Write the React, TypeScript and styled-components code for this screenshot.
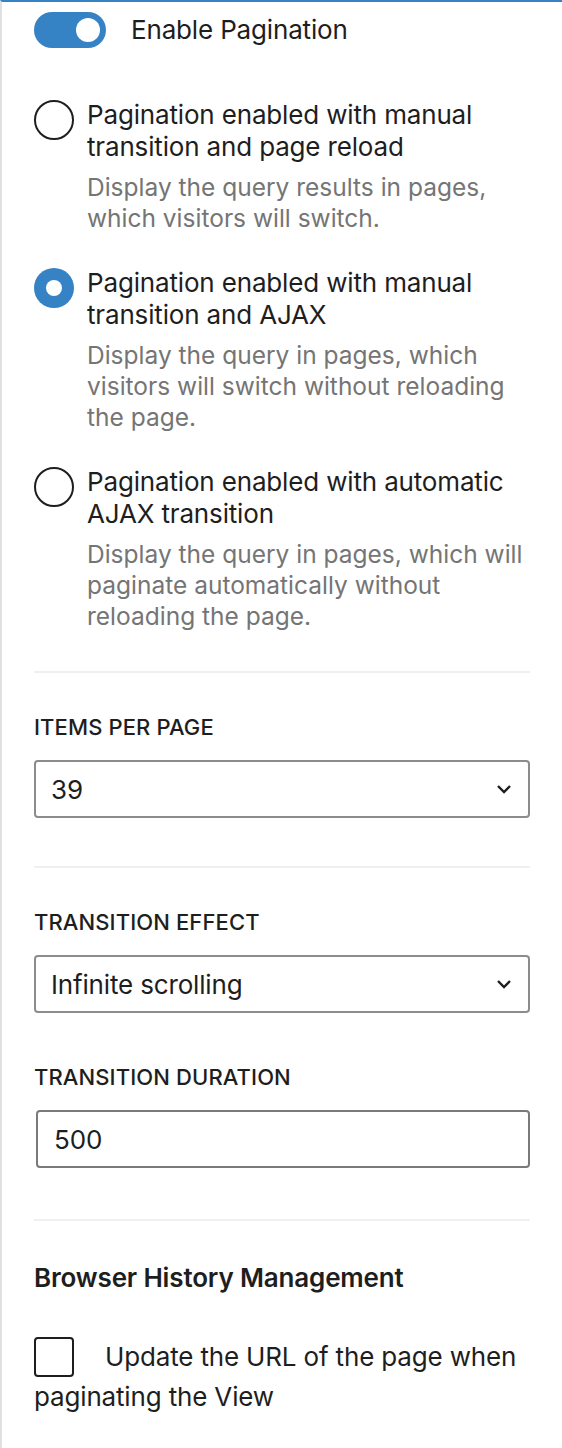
import styled, { createGlobalStyle } from "styled-components";

const GlobalStyle = createGlobalStyle`
  html, body {
    margin: 0;
    padding: 0;
    background: #ffffff;
  }
  body {
    font-family: Inter, "Noto Sans", "Liberation Sans", sans-serif;
    color: #1e1e1e;
    -webkit-font-smoothing: antialiased;
  }
`;

const accent = "#3582c4";

const Sidebar = styled.div`
  box-sizing: border-box;
  width: 562px;
  min-height: 1448px;
  border-left: 2px solid #e0e0e0;
  border-top: 2px solid ${accent};
  padding: 10px 32px 40px 32px;
  display: flex;
  flex-direction: column;
  letter-spacing: -0.01em;
`;

const ToggleRow = styled.label`
  display: flex;
  align-items: center;
  gap: 25px;
  height: 36px;
  font-size: 26px;
  line-height: 32px;
`;

const ToggleTrack = styled.span<{ $on: boolean }>`
  position: relative;
  width: 72px;
  height: 36px;
  border-radius: 18px;
  background: ${({ $on }) => ($on ? accent : "#ffffff")};
  flex-shrink: 0;
`;

const ToggleKnob = styled.span`
  position: absolute;
  top: 6px;
  right: 6px;
  width: 24px;
  height: 24px;
  border-radius: 50%;
  background: #ffffff;
`;

const RadioList = styled.div`
  display: flex;
  flex-direction: column;
  gap: 33px;
  margin-top: 51px;
`;

const Option = styled.label`
  display: flex;
  align-items: flex-start;
  gap: 13px;
`;

const RadioDot = styled.span<{ $checked: boolean }>`
  box-sizing: border-box;
  flex-shrink: 0;
  width: 40px;
  height: 40px;
  margin-top: 1px;
  border-radius: 50%;
  border: ${({ $checked }) => ($checked ? "none" : "2.5px solid #1e1e1e")};
  background: ${({ $checked }) => ($checked ? accent : "#ffffff")};
  display: flex;
  align-items: center;
  justify-content: center;

  &::after {
    content: "";
    display: ${({ $checked }) => ($checked ? "block" : "none")};
    width: 16px;
    height: 16px;
    border-radius: 50%;
    background: #ffffff;
  }
`;

const OptionText = styled.div`
  display: flex;
  flex-direction: column;
  gap: 9px;
`;

const OptionTitle = styled.span`
  font-size: 26px;
  line-height: 32px;
  color: #1e1e1e;
`;

const OptionHelp = styled.span`
  font-size: 24.5px;
  line-height: 31px;
  letter-spacing: 0;
  color: #757575;
`;

const Divider = styled.hr<{ $above: number }>`
  border: none;
  height: 2px;
  background: #f0f0f0;
  margin: ${({ $above }) => $above}px 0 0 0;
`;

const Field = styled.div<{ $above: number }>`
  display: flex;
  flex-direction: column;
  gap: 19px;
  margin-top: ${({ $above }) => $above}px;
`;

const FieldLabel = styled.label`
  font-size: 22px;
  line-height: 28px;
  font-weight: 500;
  text-transform: uppercase;
  letter-spacing: 0.005em;
  color: #1e1e1e;
`;

const SelectBox = styled.div`
  box-sizing: border-box;
  height: 58px;
  border: 2px solid #8c8c8c;
  border-radius: 4px;
  padding: 0 16px 0 15px;
  display: flex;
  align-items: center;
  justify-content: space-between;
  font-size: 26px;
  color: #1e1e1e;
`;

const NumberBox = styled.div`
  box-sizing: border-box;
  height: 58px;
  margin-left: 2px;
  border: 2px solid #7a7a7a;
  border-radius: 4px;
  padding: 0 16px;
  display: flex;
  align-items: center;
  font-size: 26px;
  color: #1e1e1e;
`;

const SectionTitle = styled.h2`
  margin: 41px 0 0 0;
  font-size: 26px;
  line-height: 32px;
  font-weight: 600;
  color: #1e1e1e;
`;

const CheckLine = styled.p`
  margin: 43px 0 0 0;
  font-size: 26px;
  line-height: 40px;
  color: #1e1e1e;
`;

const CheckBox = styled.span`
  box-sizing: border-box;
  display: inline-block;
  vertical-align: top;
  width: 40px;
  height: 40px;
  border: 2.5px solid #1e1e1e;
  border-radius: 4px;
  margin-right: 31px;
`;

const Chevron = () => (
  <svg width="16" height="10" viewBox="0 0 16 10" fill="none">
    <path d="M2 2l6 6 6-6" stroke="#1e1e1e" strokeWidth="2.4" />
  </svg>
);

const options = [
  {
    title: "Pagination enabled with manual transition and page reload",
    help: "Display the query results in pages, which visitors will switch.",
    checked: false
  },
  {
    title: "Pagination enabled with manual transition and AJAX",
    help: "Display the query in pages, which visitors will switch without reloading the page.",
    checked: true
  },
  {
    title: "Pagination enabled with automatic AJAX transition",
    help: "Display the query in pages, which will paginate automatically without reloading the page.",
    checked: false
  }
];

export default function App() {
  return (
    <>
      <GlobalStyle />
      <Sidebar>
        <ToggleRow>
          <ToggleTrack $on>
            <ToggleKnob />
          </ToggleTrack>
          Enable Pagination
        </ToggleRow>

        <RadioList>
          {options.map((o) => (
            <Option key={o.title}>
              <RadioDot $checked={o.checked} />
              <OptionText>
                <OptionTitle>{o.title}</OptionTitle>
                <OptionHelp>{o.help}</OptionHelp>
              </OptionText>
            </Option>
          ))}
        </RadioList>

        <Divider $above={39} />

        <Field $above={40}>
          <FieldLabel>Items per page</FieldLabel>
          <SelectBox>
            <span>39</span>
            <Chevron />
          </SelectBox>
        </Field>

        <Divider $above={48} />

        <Field $above={40}>
          <FieldLabel>Transition effect</FieldLabel>
          <SelectBox>
            <span>Infinite scrolling</span>
            <Chevron />
          </SelectBox>
        </Field>

        <Field $above={50}>
          <FieldLabel>Transition duration</FieldLabel>
          <NumberBox>500</NumberBox>
        </Field>

        <Divider $above={51} />

        <SectionTitle>Browser History Management</SectionTitle>

        <CheckLine>
          <CheckBox />
          Update the URL of the page when paginating the View
        </CheckLine>
      </Sidebar>
    </>
  );
}
